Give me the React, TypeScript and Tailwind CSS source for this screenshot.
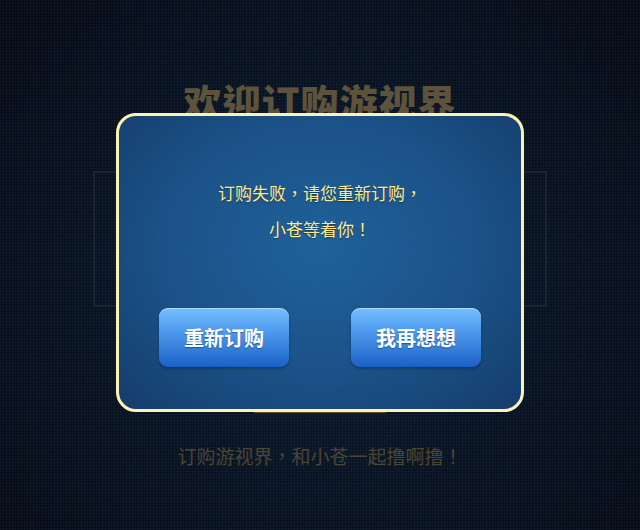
import React from "react";

export default function App() {
  const cjk = { fontFamily: '"Noto Sans CJK TC", "Noto Sans CJK SC", "Noto Sans", sans-serif' };
  return (
    <div
      className="relative w-[640px] h-[530px] overflow-hidden bg-[radial-gradient(ellipse_at_50%_55%,#0c1b2e_0%,#081322_45%,#050a13_100%)]"
      style={cjk}
    >
      {/* grid texture */}
      <div className="absolute inset-0 bg-[linear-gradient(rgba(120,150,190,0.05)_1px,transparent_1px),linear-gradient(90deg,rgba(120,150,190,0.05)_1px,transparent_1px)] bg-[size:3px_3px]" />

      {/* page beneath */}
      <div className="relative flex flex-col items-center">
        <div className="mt-[82px] h-[38px] leading-[38px] text-[38px] font-black text-[#5d523b] tracking-[1px]">
          欢迎订购游视界
        </div>
        <div className="mt-[51px] w-[454px] h-[136px] border-2 border-[#1c2430]" />
        <div className="mt-[73px] w-[140px] h-[33px] rounded-md bg-[#6a5226]" />
        <div className="mt-[31px] h-[24px] leading-[24px] text-[19px] text-[#4b4531]">
          订购游视界，和小苍一起撸啊撸！
        </div>
      </div>

      {/* modal overlay */}
      <div className="absolute inset-0 flex justify-center pt-[113px]">
        <div className="w-[408px] h-[299px] rounded-[20px] border-[3px] border-[#fdf1b4] bg-[radial-gradient(ellipse_at_50%_45%,#1f6199_0%,#1b5288_55%,#153c6c_100%)] flex flex-col items-center">
          <div className="mt-[59px] text-[17px] leading-[36px] text-[#ffe98c] text-center [text-shadow:0_1px_1px_rgba(0,0,0,0.35)]">
            <div>订购失败，请您重新订购，</div>
            <div>小苍等着你！</div>
          </div>
          <div className="mt-[61px] w-full flex justify-between px-[40px]">
            <button className="w-[130px] h-[59px] rounded-[9px] bg-[linear-gradient(180deg,#72bfff_0%,#4a95ea_45%,#1a61c6_100%)] shadow-[inset_0_1px_0_rgba(255,255,255,0.45),0_2px_3px_rgba(0,0,0,0.25)] text-white text-[20px] font-bold [text-shadow:0_1px_1px_rgba(0,0,0,0.35)]">
              重新订购
            </button>
            <button className="w-[130px] h-[59px] rounded-[9px] bg-[linear-gradient(180deg,#72bfff_0%,#4a95ea_45%,#1a61c6_100%)] shadow-[inset_0_1px_0_rgba(255,255,255,0.45),0_2px_3px_rgba(0,0,0,0.25)] text-white text-[20px] font-bold [text-shadow:0_1px_1px_rgba(0,0,0,0.35)]">
              我再想想
            </button>
          </div>
        </div>
      </div>
    </div>
  );
}
